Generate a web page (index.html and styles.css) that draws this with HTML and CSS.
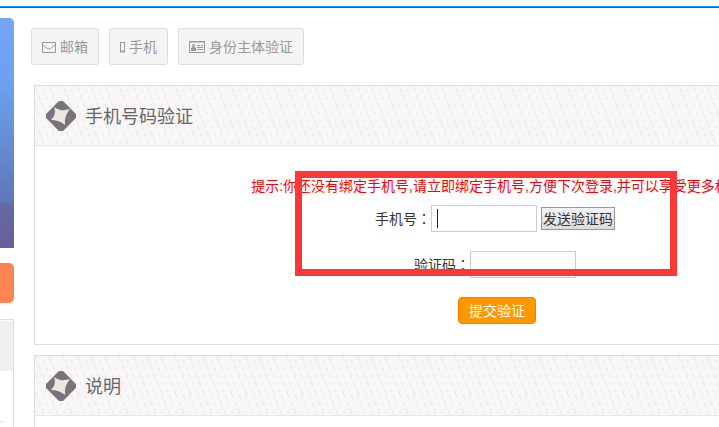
FILE: index.html
```html
<!DOCTYPE html>
<html lang="zh-CN">
<head>
	<meta charset="UTF-8">
	<title>手机号码验证</title>
	<link rel="stylesheet" href="styles.css">
</head>
<body>
	<div class="topline"></div>
	<div class="wrap">
		<div class="side">
			<div class="banner"></div>
			<div class="tip"></div>
			<div class="menu">
				<div class="menu-title"></div>
				<div class="menu-item"></div>
			</div>
		</div>
		<div class="main">
			<div class="tabs">
				<a href="#email"><svg width="14" height="12" viewBox="0 0 14 12"><path d="M.5 1.500h13v10H.5zM.5 3.500l5 4q1.500 1 3 0l5-4"/></svg>邮箱</a>
				<a href="#phone"><svg width="5" height="12" viewBox="0 0 5 12"><path d="M.5 1v10M4.500 1v10M0 1.500h5M0 10h5M0 11h5"/></svg>手机</a>
				<a href="#identity"><svg width="16" height="12" viewBox="0 0 16 12"><path d="M.5.5h15v11H.5zM0 1h16M8 4.500h3M12 4.500h2M8 6.500h6M8 8.500h6"/><path class="fill" d="M2 10V7l1.500-1V3h2v3L7 7v3z"/></svg>身份主体验证</a>
			</div>
			<div class="panel">
				<div class="panel-head">
					<svg width="30" height="30" viewBox="0 0 30 30"><rect class="tile" x="3" y="3" width="24" height="24" rx="4" transform="rotate(45 15 15)"/><path class="star" d="M8 6Q14 11 24 8Q18 15 19 24Q13 19 5 19Q11 13 8 6z"/></svg>
					<h2>手机号码验证</h2>
				</div>
				<form class="panel-body">
					<p class="hint">提示:你还没有绑定手机号,请立即绑定手机号,方便下次登录,并可以享受更多权益</p>
					<div class="row">
						<label for="mobile">手机号<span class="colon" lang="zh-TW">：</span></label>
						<input type="text" id="mobile" class="text caret">
						<button type="button" class="send">发送验证码</button>
					</div>
					<div class="row">
						<label for="code">验证码<span class="colon" lang="zh-TW">：</span></label>
						<input type="text" id="code" class="text">
					</div>
					<button type="submit" class="submit">提交验证</button>
					<div class="mark"></div>
				</form>
			</div>
			<div class="panel">
				<div class="panel-head">
					<svg width="30" height="30" viewBox="0 0 30 30"><rect class="tile" x="3" y="3" width="24" height="24" rx="4" transform="rotate(45 15 15)"/><path class="star" d="M8 6Q14 11 24 8Q18 15 19 24Q13 19 5 19Q11 13 8 6z"/></svg>
					<h2>说明</h2>
				</div>
				<div class="panel-body"></div>
			</div>
		</div>
	</div>
</body>
</html>
```

FILE: styles.css
```css
*{padding:0;margin:0;box-sizing:border-box;}
html{height:100%;overflow:hidden;}
body{height:100%;overflow:hidden;background:#fff;color:#333;font:14px/20px "Liberation Sans","Noto Sans CJK SC",sans-serif;}
a{text-decoration:none;}
input,button{font:inherit;color:inherit;}
.topline{height:8px;border-bottom:1px solid #0068bd;box-shadow:inset 0 -1px #0b9bff;}
.wrap{display:flex;align-items:flex-start;padding-top:10px;}

/* 左侧栏 */
.side{width:14px;flex:none;}
.banner{height:230px;border-radius:0 5px 0 0;background:repeating-linear-gradient(45deg,rgba(30,60,140,.06) 0 1px,transparent 1px 3px),linear-gradient(#74a8fa,#6ea2f0 30%,#6078b8 80%,#666ba6 81%,#66609c);}
.tip{height:40px;margin:15px 0 16px;border-radius:0 5px 5px 0;background:#ff8454;}
.menu{height:200px;padding-top:1px;border:1px solid #d5dcf5;border-left:0;}
.menu-title{height:50px;background:#f0f0f0;}
.menu-item{width:3px;height:51px;border-bottom:1px dotted #ccc;}

/* 主体 */
.main{flex:1 0 auto;min-width:946px;padding:10px 0 0 17px;}
.tabs{display:flex;gap:10px;margin-bottom:20px;}
.tabs a{display:flex;align-items:center;gap:4px;height:37px;padding:0 10px;border:1px solid #ddd;border-radius:3px;background:#f4f4f4;color:#999;}
.tabs svg{fill:none;stroke:#999;}
.tabs .fill{fill:#999;stroke:none;}
.panel{margin:0 0 10px 3px;border:1px solid #ddd;}
.panel-head{display:flex;align-items:center;gap:9px;height:60px;padding-left:11px;border-bottom:1px solid #e6e6e6;background:#f8f6f7 url("data:image/svg+xml,%3Csvg xmlns='http://www.w3.org/2000/svg' width='14' height='36'%3E%3Cg stroke='%23e6e4e5' fill='none'%3E%3Cpath d='M0 0l14 36M-14 0L0 36' stroke-dasharray='6 3'/%3E%3Cpath d='M7 0l14 36M-7 0L7 36' stroke-dasharray='3 5' stroke-dashoffset='4'/%3E%3C/g%3E%3C/svg%3E");}
.panel-head h2{padding-top:2px;font-size:18px;line-height:28px;font-weight:normal;color:#666;}
.tile{fill:#77757b;}
.star{fill:#ece8e1;}
.panel-body{position:relative;display:flex;flex-direction:column;align-items:center;min-height:198px;padding:30px 0 20px;}
.hint{white-space:nowrap;color:#f00;}
.row{display:flex;align-items:center;margin:9px 4px 10px 0;}
.colon{font-family:"Noto Sans CJK TC",sans-serif;}
.text{width:106px;height:27px;padding:0 5px;border:1px solid #ccc;background:#fff;}
.caret{background:linear-gradient(#222,#222) 5px 3px/1px 19px no-repeat #fff;}
.send{height:23px;margin-left:4px;padding:0 1px;border:1px solid #999;background:linear-gradient(#f3f3f3,#dcdcdc);}
.submit{height:27px;margin-top:9px;padding:0 10px;border:1px solid #ff7800;border-radius:4px;background:#ff9800;color:#fff;}

/* 红框标注 */
.mark{position:absolute;left:260px;top:25px;width:382px;height:105px;border:7px solid #fc3737;pointer-events:none;}
```
